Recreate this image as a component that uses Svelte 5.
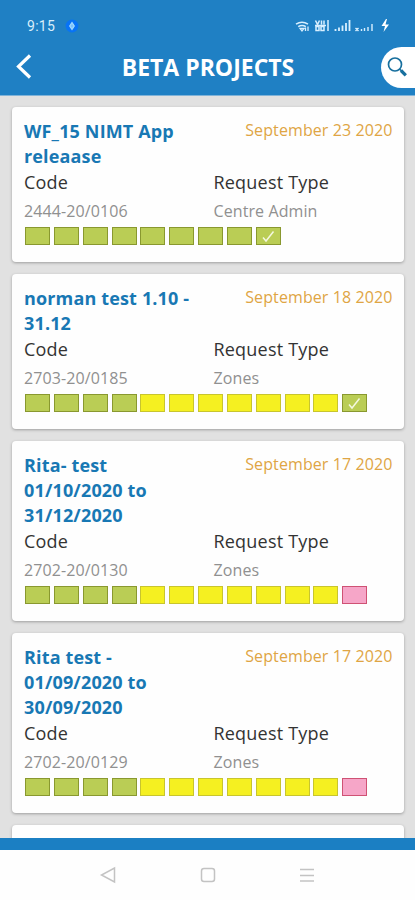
<script>
    const projects = [
        {
            title: ['WF_15 NIMT App', 'releaase'],
            date: 'September 23 2020',
            code: '2444-20/0106',
            type: 'Centre Admin',
            steps: 'ggggggggd'
        },
        {
            title: ['norman test 1.10 -', '31.12'],
            date: 'September 18 2020',
            code: '2703-20/0185',
            type: 'Zones',
            steps: 'ggggyyyyyyyd'
        },
        {
            title: ['Rita- test', '01/10/2020 to', '31/12/2020'],
            date: 'September 17 2020',
            code: '2702-20/0130',
            type: 'Zones',
            steps: 'ggggyyyyyyyp'
        },
        {
            title: ['Rita test -', '01/09/2020 to', '30/09/2020'],
            date: 'September 17 2020',
            code: '2702-20/0129',
            type: 'Zones',
            steps: 'ggggyyyyyyyp'
        }
    ];

    // g = finished, y = waiting, p = rejected, d = closed with a tick
    const colors = { g: 'green', y: 'yellow', p: 'pink', d: 'green' };
</script>

<div class="phone">
    <header>
        <div class="status">
            <span class="time">9:15</span>
            <svg class="badge" width="14" height="14" viewBox="0 0 14 14">
                <circle cx="7" cy="7" r="6.4" fill="#0873f5" />
                <path d="M7 2.6 10 7 7 11.4 4 7Z" fill="#a5dcff" />
                <path d="M7 4.6v4.8M5.4 7h3.2" stroke="#55a5f3" stroke-width=".6" />
            </svg>
            <svg class="signals" width="98" height="16" viewBox="0 0 98 16" fill="none" stroke="#d8efff">
                <path d="M1 6.2q6-4 12 0M3.2 8.7q4-2.6 7.6 0" stroke-width="1.5" />
                <path d="m5 10.3 2 2.7 2-2.7ZM10.5 9.5v3.5M13 8.5v4.5" stroke-width="1.3" />
                <path d="m20.5 2.5 2 4 2-4M26.5 2.5v4M29 2.5v4M21 8.5h3v4h-3zM26 8.5h3v4h-3zM33 2v11M20 7.5h11" stroke-width="1.5" />
                <path d="M40.5 13v-2M44 13v-3.5M47.500 13V7.500M51 13V5M54.500 13V2" stroke-width="1.800" />
                <path d="m60.500 10 3 3m0-3-3 3M66.500 13v-2M69.500 13v-3M73 13V9M77 13V6" stroke-width="1.400" />
                <path d="m91 1-4.500 7H90l-1.500 6 5.500-7.500h-3.500L92 1Z" fill="#fff" stroke="none" />
            </svg>
        </div>
        <div class="bar">
            <button class="back" aria-label="Back">
                <svg width="18" height="28" viewBox="0 0 18 28">
                    <path d="M15 2.5 3.5 13.5 15 24.5" fill="none" stroke="#fff" stroke-width="3.2" />
                </svg>
            </button>
            <h1>BETA PROJECTS</h1>
            <button class="search" aria-label="Search">
                <svg width="22" height="22" viewBox="0 0 22 22" fill="none" stroke="#176f9e">
                    <circle cx="8" cy="8.5" r="6.5" stroke-width="1.7" />
                    <path d="m12.8 13.3 2 2" stroke-width="1.6" />
                    <path d="m14 14.5 4.800 4.800" stroke-width="3.2" />
                </svg>
            </button>
        </div>
    </header>

    <main>
        {#each projects as project}
            <section class="card">
                <div class="top">
                    <h2>
                        {#each project.title as line}
                            <span>{line}</span>
                        {/each}
                    </h2>
                    <time>{project.date}</time>
                </div>
                <div class="details">
                    <div class="field">
                        <div class="label">Code</div>
                        <div class="value">{project.code}</div>
                    </div>
                    <div class="field">
                        <div class="label">Request Type</div>
                        <div class="value">{project.type}</div>
                    </div>
                </div>
                <div class="steps">
                    {#each project.steps as step}
                        <div class="step {colors[step]}">
                            {#if step === 'd'}
                                <svg width="15" height="13" viewBox="0 0 15 13">
                                    <path d="m2 7.5 3 3.500L12.500 1.500" fill="none" stroke="#f4f8df" stroke-width="1.5" />
                                </svg>
                            {/if}
                        </div>
                    {/each}
                </div>
            </section>
        {/each}
        <section class="card"></section>
    </main>

    <div class="strip"></div>
    <nav>
        <svg width="18" height="18" viewBox="0 0 18 18">
            <path d="M15.500 2v14L2.500 9Z" />
        </svg>
        <svg width="18" height="18" viewBox="0 0 18 18">
            <rect x="2.500" y="2.500" width="13" height="13" rx="2.500" />
        </svg>
        <svg width="18" height="18" viewBox="0 0 18 18">
            <path d="M1 3.500h14M1 9.500h14M1 15h14" />
        </svg>
    </nav>
</div>

<style>
    :global(body) {
        overflow: hidden;
    }

    .phone {
        display: flex;
        flex-direction: column;
        width: 415px;
        height: 900px;
        overflow: hidden;
        background: #fefefe;
        font-family: 'Open Sans', 'Noto Sans', sans-serif;
    }

    header {
        flex: none;
        height: 95.5px;
        background: #1f80c4;
        border-bottom: 1px solid #80b3d8;
        box-sizing: border-box;
    }

    .status {
        display: flex;
        align-items: center;
        height: 46px;
        padding: 6px 22px 0 27px;
        box-sizing: border-box;
    }

    .time {
        width: 38px;
        color: #d9eefb;
        font-family: Roboto, sans-serif;
        font-size: 14px;
        letter-spacing: 0.3px;
    }

    .signals {
        margin-left: auto;
    }

    .bar {
        display: flex;
        align-items: center;
        justify-content: space-between;
        height: 42px;
    }

    button {
        display: flex;
        align-items: center;
        padding: 0;
        border: none;
        background: none;
    }

    .back {
        width: 35px;
        padding-left: 15px;
        box-sizing: border-box;
    }

    h1 {
        margin: 0;
        color: #fff;
        font-size: 23px;
        font-weight: 700;
        line-height: 40px;
    }

    .search {
        width: 34px;
        height: 41px;
        padding-left: 6px;
        border-radius: 21px 0 0 21px;
        background: #fff;
        box-sizing: border-box;
    }

    main {
        flex: 1;
        display: flex;
        flex-direction: column;
        gap: 12px;
        padding: 11.5px 11.5px 0 12px;
        overflow: hidden;
        background: #e1e1e1;
    }

    .card {
        flex: none;
        padding: 12px 11px 17px 12px;
        border-radius: 4px;
        background: #fefefe;
        box-shadow: 0 1px 3px rgba(0, 0, 0, 0.3);
    }

    .top {
        display: flex;
        justify-content: space-between;
    }

    h2 {
        margin: 0;
        color: #1878b4;
        font-size: 18px;
        font-weight: 700;
        line-height: 25px;
        letter-spacing: 0.15px;
    }

    h2 span {
        display: block;
        white-space: nowrap;
    }

    time {
        color: #dfa544;
        font-size: 16px;
        line-height: 22px;
        letter-spacing: 0.1px;
        white-space: nowrap;
    }

    .details {
        display: flex;
        height: 58px;
    }

    .field {
        flex: none;
        width: 189.5px;
    }

    .field:last-child {
        width: auto;
    }

    .label {
        color: #333;
        font-size: 18px;
        line-height: 26px;
        letter-spacing: 0.2px;
    }

    .value {
        margin-top: 5px;
        color: #909090;
        font-size: 16px;
        line-height: 22px;
        letter-spacing: 0.1px;
    }

    .steps {
        display: flex;
        gap: 3.85px;
        height: 18px;
        padding-left: 1px;
    }

    .step {
        display: flex;
        align-items: center;
        justify-content: center;
        width: 25px;
        height: 18px;
        border: 1px solid;
        box-sizing: border-box;
    }

    .green {
        border-color: #89982f;
        background: #bacd55;
    }

    .yellow {
        border-color: #c8c52e;
        background: #f5f021;
    }

    .pink {
        border-color: #cf5274;
        background: #f6a6c8;
    }

    .strip {
        flex: none;
        height: 12px;
        background: #1b7fc3;
    }

    nav {
        flex: none;
        display: flex;
        align-items: center;
        justify-content: center;
        gap: 82px;
        height: 50px;
    }

    nav svg {
        fill: none;
        stroke: #c3c3c3;
        stroke-width: 1.5;
    }
</style>
